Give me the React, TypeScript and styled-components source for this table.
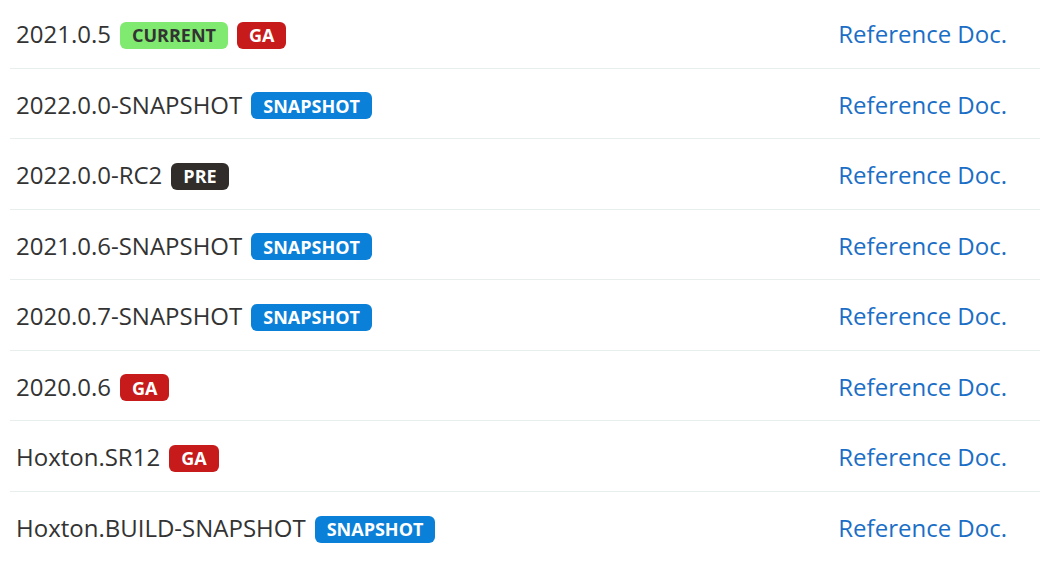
import React from "react";
import styled, { createGlobalStyle } from "styled-components";

type BadgeKind = "current" | "ga" | "snapshot" | "pre";

type Release = {
  version: string;
  badges: BadgeKind[];
};

const releases: Release[] = [
  { version: "2021.0.5", badges: ["current", "ga"] },
  { version: "2022.0.0-SNAPSHOT", badges: ["snapshot"] },
  { version: "2022.0.0-RC2", badges: ["pre"] },
  { version: "2021.0.6-SNAPSHOT", badges: ["snapshot"] },
  { version: "2020.0.7-SNAPSHOT", badges: ["snapshot"] },
  { version: "2020.0.6", badges: ["ga"] },
  { version: "Hoxton.SR12", badges: ["ga"] },
  { version: "Hoxton.BUILD-SNAPSHOT", badges: ["snapshot"] },
];

const badgeColors: Record<BadgeKind, { bg: string; fg: string }> = {
  current: { bg: "#80e96f", fg: "#333333" },
  ga: { bg: "#c71a1a", fg: "#ffffff" },
  snapshot: { bg: "#0a80d8", fg: "#ffffff" },
  pre: { bg: "#302d2b", fg: "#ffffff" },
};

const GlobalStyle = createGlobalStyle`
  html, body {
    margin: 0;
    padding: 0;
    background: #ffffff;
  }
  body {
    font-family: "Open Sans", "Liberation Sans", sans-serif;
    color: #333333;
  }
`;

const App = () => {
  return (
    <>
      <GlobalStyle />
      <List>
        {releases.map((r) => (
          <Row key={r.version}>
            <VersionCell>
              <Version>{r.version}</Version>
              {r.badges.map((b) => (
                <Badge key={b} $kind={b}>
                  {b}
                </Badge>
              ))}
            </VersionCell>
            <DocLink href="#">Reference Doc.</DocLink>
          </Row>
        ))}
      </List>
    </>
  );
};

export default App;

const List = styled.div`
  margin: -2px 1px 0 10px;
  display: flex;
  flex-direction: column;
`;

const Row = styled.div`
  box-sizing: border-box;
  height: 70.5px;
  display: flex;
  align-items: center;
  justify-content: space-between;
  padding: 3px 33px 0 6px;
  border-bottom: 1px solid #e8eded;

  &:last-child {
    border-bottom: none;
  }
`;

const VersionCell = styled.div`
  display: flex;
  align-items: center;
  gap: 9px;
`;

const Version = styled.span`
  font-size: 24px;
  line-height: 30px;
  color: #333333;
`;

const Badge = styled.span<{ $kind: BadgeKind }>`
  display: inline-flex;
  align-items: center;
  height: 27px;
  margin-top: 2px;
  padding: 0 12px;
  border-radius: 6px;
  background: ${(p) => badgeColors[p.$kind].bg};
  color: ${(p) => badgeColors[p.$kind].fg};
  font-size: 18px;
  font-weight: 700;
  text-transform: uppercase;
  line-height: 1;
`;

const DocLink = styled.a`
  font-size: 24px;
  line-height: 30px;
  color: #1b6ec6;
  text-decoration: none;
`;
